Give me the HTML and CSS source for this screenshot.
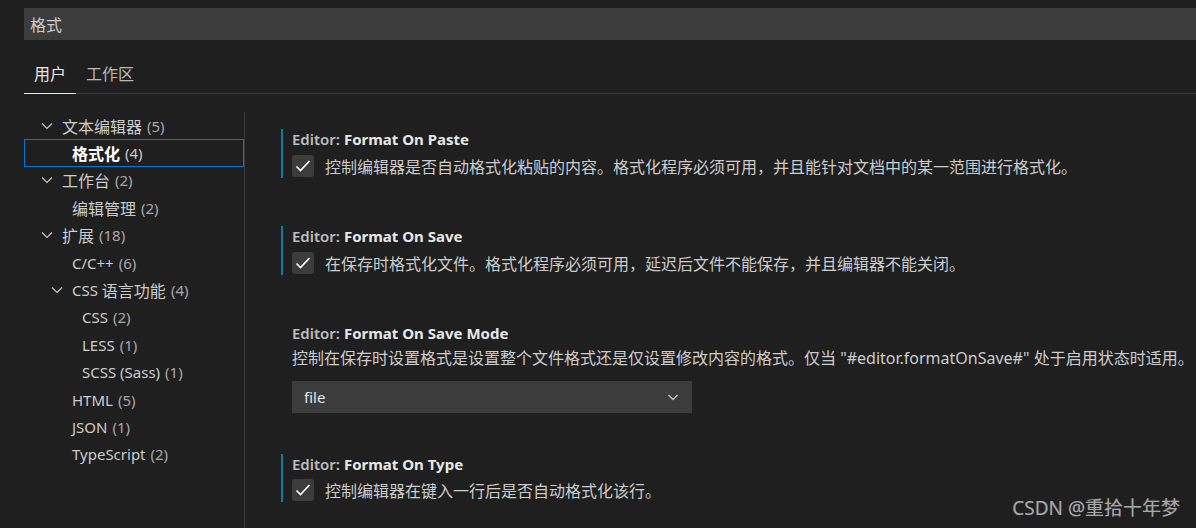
FILE: index.html
```html
<!DOCTYPE html>
<html lang="zh-CN">
  <head>
    <meta charset="UTF-8" />
    <meta name="viewport" content="width=device-width, initial-scale=1.0" />
    <title>设置</title>
    <link rel="stylesheet" href="styles.css">
  </head>
  <body>
    <div class="search-box">格式</div>

    <div class="tabs">
      <div class="tab active">用户</div>
      <div class="tab">工作区</div>
    </div>

    <div class="settings-body">
      <div class="toc">
        <div class="toc-row lvl-1">
          <svg class="chev" width="16" height="16" viewBox="0 0 16 16"><path d="M3 5.5l5 5 5-5" fill="none" stroke="#c5c5c5" stroke-width="1.2"/></svg>
          <span class="zh">文本编辑器</span><span class="count">(5)</span>
        </div>
        <div class="toc-row lvl-2 selected"><span class="zh">格式化</span><span class="count">(4)</span></div>
        <div class="toc-row lvl-1">
          <svg class="chev" width="16" height="16" viewBox="0 0 16 16"><path d="M3 5.5l5 5 5-5" fill="none" stroke="#c5c5c5" stroke-width="1.2"/></svg>
          <span class="zh">工作台</span><span class="count">(2)</span>
        </div>
        <div class="toc-row lvl-2"><span class="zh">编辑管理</span><span class="count">(2)</span></div>
        <div class="toc-row lvl-1">
          <svg class="chev" width="16" height="16" viewBox="0 0 16 16"><path d="M3 5.5l5 5 5-5" fill="none" stroke="#c5c5c5" stroke-width="1.2"/></svg>
          <span class="zh">扩展</span><span class="count">(18)</span>
        </div>
        <div class="toc-row lvl-2">C/C++<span class="count">(6)</span></div>
        <div class="toc-row lvl-2b">
          <svg class="chev" width="16" height="16" viewBox="0 0 16 16"><path d="M3 5.5l5 5 5-5" fill="none" stroke="#c5c5c5" stroke-width="1.2"/></svg>
          CSS&nbsp;<span class="zh">语言功能</span><span class="count">(4)</span>
        </div>
        <div class="toc-row lvl-3">CSS<span class="count">(2)</span></div>
        <div class="toc-row lvl-3">LESS<span class="count">(1)</span></div>
        <div class="toc-row lvl-3">SCSS (Sass)<span class="count">(1)</span></div>
        <div class="toc-row lvl-2">HTML<span class="count">(5)</span></div>
        <div class="toc-row lvl-2">JSON<span class="count">(1)</span></div>
        <div class="toc-row lvl-2">TypeScript<span class="count">(2)</span></div>
      </div>

      <div class="settings-list">
        <div class="setting modified">
          <div class="setting-title"><span class="category">Editor: </span>Format On Paste</div>
          <div class="check-row">
            <span class="checkbox">
              <svg width="22" height="22" viewBox="0 0 22 22"><path d="M4.5 11.5l4 4 9-9.5" fill="none" stroke="#ffffff" stroke-width="1.6"/></svg>
            </span>
            <span class="desc">控制编辑器是否自动格式化粘贴的内容。格式化程序必须可用，并且能针对文档中的某一范围进行格式化。</span>
          </div>
        </div>

        <div class="setting modified">
          <div class="setting-title"><span class="category">Editor: </span>Format On Save</div>
          <div class="check-row">
            <span class="checkbox">
              <svg width="22" height="22" viewBox="0 0 22 22"><path d="M4.5 11.5l4 4 9-9.5" fill="none" stroke="#ffffff" stroke-width="1.6"/></svg>
            </span>
            <span class="desc">在保存时格式化文件。格式化程序必须可用，延迟后文件不能保存，并且编辑器不能关闭。</span>
          </div>
        </div>

        <div class="setting setting-select">
          <div class="setting-title"><span class="category">Editor: </span>Format On Save Mode</div>
          <div class="desc desc-block">控制在保存时设置格式是设置整个文件格式还是仅设置修改内容的格式。仅当 "#editor.formatOnSave#" 处于启用状态时适用。</div>
          <div class="select">
            <span>file</span>
            <svg width="16" height="16" viewBox="0 0 16 16"><path d="M3.5 6l4.5 4.5L12.5 6" fill="none" stroke="#c5c5c5" stroke-width="1.3"/></svg>
          </div>
        </div>

        <div class="setting modified last">
          <div class="setting-title"><span class="category">Editor: </span>Format On Type</div>
          <div class="check-row">
            <span class="checkbox">
              <svg width="22" height="22" viewBox="0 0 22 22"><path d="M4.5 11.5l4 4 9-9.5" fill="none" stroke="#ffffff" stroke-width="1.6"/></svg>
            </span>
            <span class="desc">控制编辑器在键入一行后是否自动格式化该行。</span>
          </div>
        </div>
      </div>
    </div>

    <div class="watermark">CSDN @重拾十年梦</div>
  </body>
</html>
```

FILE: styles.css
```css
body {
  margin: 0;
  background-color: #1f1f1f;
  color: #cccccc;
  font-family: "Noto Sans", "Noto Sans CJK SC", sans-serif;
  font-size: 15px;
  height: 528px;
  overflow: hidden;
  position: relative;
}

.search-box {
  margin: 8px 0 0 24px;
  height: 32px;
  line-height: 34px;
  padding-left: 6px;
  background-color: #3c3c3c;
  color: #cccccc;
  font-size: 16px;
}

.tabs {
  display: flex;
  margin-left: 24px;
  border-bottom: 1px solid #3c3c3c;
}

.tab {
  padding: 23px 10px 8px 10px;
  line-height: 22px;
  font-size: 16px;
  color: #b8b8b8;
  margin-bottom: -1px;
  border-bottom: 1px solid transparent;
}

.tab.active {
  color: #e7e7e7;
  border-bottom-color: #e7e7e7;
}

.settings-body {
  display: flex;
}

/* left tree */
.toc {
  width: 220px;
  margin-left: 24px;
  margin-top: 18px;
  border-right: 1px solid #3c3c3c;
  min-height: 420px;
}

.toc-row {
  display: flex;
  align-items: center;
  height: 27.4px;
  box-sizing: border-box;
  white-space: nowrap;
  color: #cccccc;
  border: 1px solid transparent;
}

.toc-row .zh {
  font-size: 16px;
}

.toc-row .count {
  color: #a8a8a8;
  margin-left: 5px;
}

.lvl-1 { padding-left: 14px; }
.lvl-2 { padding-left: 47px; }
.lvl-2b { padding-left: 24px; }
.lvl-3 { padding-left: 57px; }

.chev {
  flex-shrink: 0;
  margin-right: 7px;
}

.toc-row.selected {
  border-color: #0078d4;
  color: #ffffff;
  font-weight: bold;
}

.toc-row.selected .count {
  font-weight: normal;
  color: #cccccc;
}

/* right side */
.settings-list {
  flex: 1;
  padding-left: 36px;
  padding-top: 35px;
}

.setting {
  border-left: 2px solid transparent;
  padding-left: 9px;
  margin-bottom: 48px;
}

.setting.modified {
  border-left-color: #0c7d9d;
}

.setting-select {
  margin-bottom: 41px;
}

.setting-title {
  line-height: 20px;
  margin-bottom: 5px;
  font-weight: bold;
  color: #e7e7e7;
  white-space: nowrap;
}

.last .setting-title {
  margin-bottom: 4px;
}

.setting-title .category {
  color: #bdbdbd;
  font-weight: 600;
}

.check-row {
  display: flex;
  align-items: center;
  height: 24px;
}

.checkbox {
  display: flex;
  width: 22px;
  height: 22px;
  border-radius: 3px;
  background-color: #3c3c3c;
  margin-right: 11px;
  flex-shrink: 0;
}

.desc {
  font-size: 16px;
  color: #cccccc;
  white-space: nowrap;
}

.desc-block {
  line-height: 20px;
  margin-top: 1px;
}

.select {
  display: flex;
  align-items: center;
  justify-content: space-between;
  width: 400px;
  height: 32px;
  box-sizing: border-box;
  margin-top: 13px;
  padding: 0 11px 0 12px;
  background-color: #3c3c3c;
  color: #e7e7e7;
}

.watermark {
  position: absolute;
  right: 16px;
  bottom: 7px;
  font-size: 19px;
  color: #a6a6a6;
  text-shadow: 0 0 1px #555;
}
```
